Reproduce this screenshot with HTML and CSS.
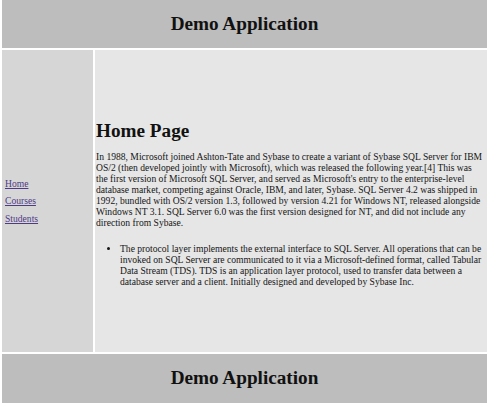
FILE: index.html
```html
<!DOCTYPE html>
<html>
<head>
<meta charset="utf-8">
<title>Demo Application</title>
<link rel="stylesheet" href="styles.css">
</head>
<body>
<div class="layout">
  <header class="banner banner-top"><h1 class="banner-title">Demo Application</h1></header>
  <nav class="sidebar">
    <a class="nav-link" href="#">Home</a>
    <a class="nav-link" href="#">Courses</a>
    <a class="nav-link" href="#">Students</a>
  </nav>
  <main class="content">
    <h1 class="page-title">Home Page</h1>
    <p class="intro">In 1988, Microsoft joined Ashton-Tate and Sybase to create a variant of Sybase SQL Server for IBM OS/2 (then developed jointly with Microsoft), which was released the following year.[4] This was the first version of Microsoft SQL Server, and served as Microsoft's entry to the enterprise-level database market, competing against Oracle, IBM, and later, Sybase. SQL Server 4.2 was shipped in 1992, bundled with OS/2 version 1.3, followed by version 4.21 for Windows NT, released alongside Windows NT 3.1. SQL Server 6.0 was the first version designed for NT, and did not include any direction from Sybase.</p>
    <ul class="points">
      <li>The protocol layer implements the external interface to SQL Server. All operations that can be invoked on SQL Server are communicated to it via a Microsoft-defined format, called Tabular Data Stream (TDS). TDS is an application layer protocol, used to transfer data between a database server and a client. Initially designed and developed by Sybase Inc.</li>
    </ul>
  </main>
  <footer class="banner banner-bottom"><h1 class="banner-title">Demo Application</h1></footer>
</div>
</body>
</html>
```

FILE: styles.css
```css
html, body {
  margin: 0;
  padding: 0;
  background: #ffffff;
}
body {
  font-family: "Liberation Serif", "Times New Roman", serif;
  font-size: 9.6px;
  color: #151515;
}
.layout {
  display: grid;
  grid-template-columns: 91px 1fr;
  grid-template-rows: 48px 302px 49px;
  gap: 2px;
  padding: 0 2px;
  width: 489px;
  height: 403px;
  box-sizing: border-box;
  overflow: hidden;
}
.banner {
  grid-column: 1 / 3;
  background: #bdbdbd;
  text-align: center;
  box-sizing: border-box;
}
.banner-top {
  padding-top: 13px;
}
.banner-bottom {
  padding-top: 13px;
}
.banner-title {
  margin: 0;
  font-size: 19.2px;
  line-height: 22px;
  font-weight: bold;
  color: #111;
}
.sidebar {
  background: #d6d6d6;
  display: flex;
  flex-direction: column;
  justify-content: center;
  padding-left: 3px;
}
.nav-link {
  display: block;
  line-height: 17.3px;
  color: #4f3a86;
}
.content {
  background: #e6e6e6;
  display: flex;
  flex-direction: column;
  justify-content: center;
  padding: 0 3px 0 1px;
}
.page-title {
  margin: 14px 0 9px;
  font-size: 19.2px;
  line-height: 22px;
  font-weight: bold;
  color: #111;
}
.intro {
  margin: 0 0 14.5px;
  line-height: 11px;
}
.points {
  margin: 0 0 9px;
  padding-left: 24px;
  line-height: 11px;
}
```
